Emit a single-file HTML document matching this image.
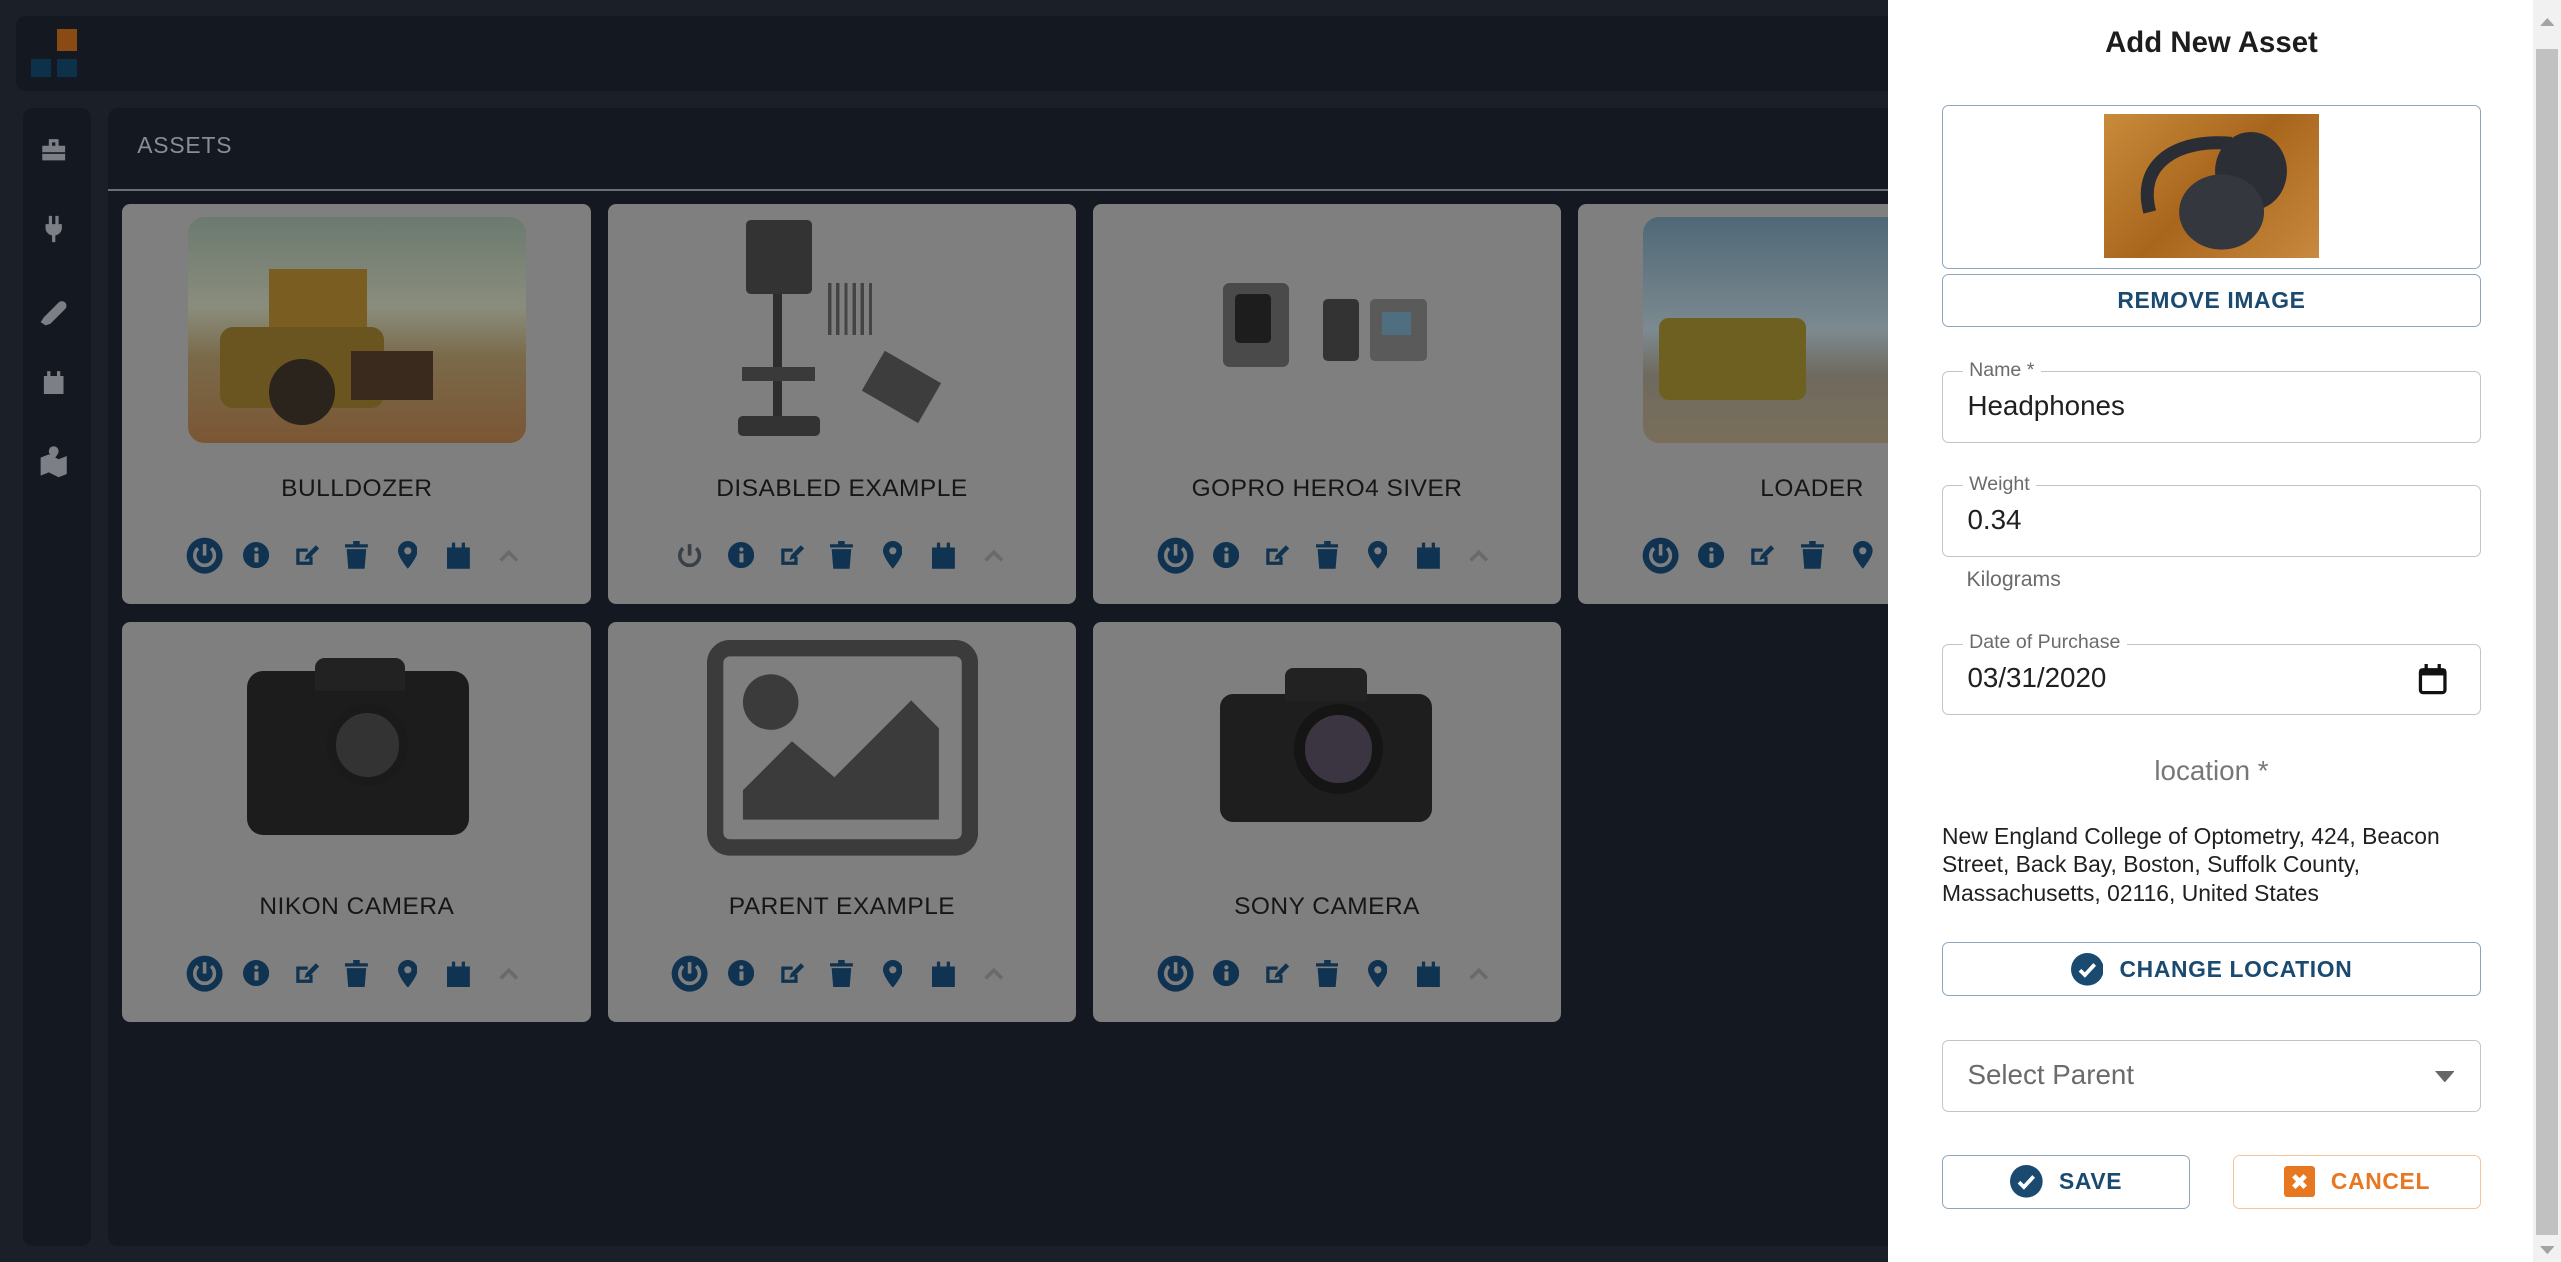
<!DOCTYPE html>
<html><head><meta charset="utf-8"><style>
*{box-sizing:border-box;margin:0;padding:0}
html,body{width:2561px;height:1262px;overflow:hidden;background:#1a1f28}
#root{zoom:1.63329;width:1568px;height:773px;position:relative;font-family:"Liberation Sans",sans-serif}
.abs{position:absolute}
.topbar{left:10px;top:10px;width:1160px;height:46px;background:#141821;border-radius:6px}
.side{left:14px;top:66px;width:42px;height:697px;background:#141821;border-radius:6px}
.main{left:66px;top:66px;width:1100px;height:697px;background:#141821;border-radius:6px}
.card{position:absolute;width:287px;height:245px;background:#7f7f7f;border-radius:5px;overflow:hidden}
.card .t{position:absolute;top:166px;width:100%;text-align:center;font-size:15px;color:#161616;letter-spacing:.3px}
.card .ic{position:absolute;top:203px;left:35px;height:24px;display:flex;align-items:center}
.card .ic span{width:31px;display:flex;justify-content:center;align-items:center}
.drawer{left:1156px;top:0;width:395px;height:773px;background:#fff}
.sb{left:1551px;top:0;width:17px;height:773px;background:#f1f1f1}
.box{position:absolute;left:33px;width:330px;border:1px solid #c4c4c4;border-radius:4px}
.lbl{position:absolute;left:12px;top:-8px;background:#fff;padding:0 4px;font-size:12px;color:#6b6b6b}
.val{position:absolute;left:15px;top:11px;font-size:17px;color:#202020}
.btn{position:absolute;border:1px solid #8ea6bd;border-radius:4px;display:flex;align-items:center;justify-content:center;font-size:14px;font-weight:bold;color:#1b4a70;letter-spacing:.4px}
</style></head><body><div id="root">
<div class="abs topbar"></div>
<div class="abs" style="left:35px;top:18px;width:12px;height:13px;background:#8a4a14"></div>
<div class="abs" style="left:19px;top:36px;width:12px;height:11px;background:#0c3148"></div>
<div class="abs" style="left:35px;top:36px;width:12px;height:11px;background:#0c3148"></div>
<div class="abs side"></div>
<svg class="abs" style="left:24px;top:80px" width="18" height="240" fill="#7c7f86">
<path d="M2 9h14v9H2z M6 5h6v4h-2V7H8v2H6z"/><rect x="2" y="13" width="14" height="1" fill="#141821"/>
<path d="M6 52h2v5H6z M10 52h2v5h-2z M4 57h10v3a5 5 0 0 1-4 4v4H8v-4a5 5 0 0 1-4-4z"/>
<path d="M1 117l2-3 9-9a2 2 0 0 1 4 4l-9 9-3 1z"/>
<path d="M3 150h12v11H3z M5 147h2v4H5z M11 147h2v4h-2z"/>
<path d="M1 200l5-2 6 3 5-2v11l-5 2-6-3-5 2z M9 193a3 3 0 0 1 3 3c0 2-3 5-3 5s-3-3-3-5a3 3 0 0 1 3-3z"/>
</svg>
<div class="abs main"></div>
<div class="abs" style="left:84px;top:81px;font-size:14px;color:#8a8d93;letter-spacing:.5px">ASSETS</div>
<div class="abs" style="left:66px;top:116px;width:1100px;height:1px;background:#6c6f75"></div>

<div class="card" style="left:75px;top:125px">
<div class="abs" style="left:40px;top:8px;width:207px;height:138px;border-radius:10px;background:linear-gradient(#6b7a70 0%,#8a8d7c 40%,#7a6a4a 62%,#7b5634 100%)"></div>
<div class="abs" style="left:90px;top:40px;width:60px;height:40px;background:#7a5d20"></div>
<div class="abs" style="left:60px;top:75px;width:100px;height:50px;background:#6a5420;border-radius:8px"></div>
<div class="abs" style="left:90px;top:95px;width:40px;height:40px;background:#2a241c;border-radius:50%"></div>
<div class="abs" style="left:140px;top:90px;width:50px;height:30px;background:#3a2a1e"></div>
<div class="t">BULLDOZER</div>
<div class="ic">ICONS1</div></div>
<div class="card" style="left:372px;top:125px">
<div class="abs" style="left:85px;top:10px;width:40px;height:45px;background:#333;border-radius:3px"></div>
<div class="abs" style="left:101px;top:55px;width:6px;height:80px;background:#2d2d2d"></div>
<div class="abs" style="left:82px;top:100px;width:45px;height:8px;background:#3a3a3a"></div>
<div class="abs" style="left:80px;top:130px;width:50px;height:12px;background:#333;border-radius:3px"></div>
<div class="abs" style="left:135px;top:48px;width:28px;height:32px;background:repeating-linear-gradient(90deg,#444 0 2px,transparent 2px 5px)"></div>
<div class="abs" style="left:160px;top:98px;width:40px;height:28px;background:#3d3d3d;transform:rotate(30deg)"></div>
<div class="t">DISABLED EXAMPLE</div>
<div class="ic">ICONS2</div></div>
<div class="card" style="left:669px;top:125px">
<div class="abs" style="left:80px;top:48px;width:40px;height:52px;background:#4a4a4a;border-radius:4px"></div>
<div class="abs" style="left:87px;top:55px;width:22px;height:30px;background:#1d1d1d;border-radius:3px"></div>
<div class="abs" style="left:141px;top:58px;width:22px;height:38px;background:#333;border-radius:3px"></div>
<div class="abs" style="left:170px;top:58px;width:35px;height:38px;background:#5a5a5a;border-radius:3px"></div>
<div class="abs" style="left:177px;top:66px;width:18px;height:14px;background:#4f6e80"></div>
<div class="t">GOPRO HERO4 SIVER</div>
<div class="ic">ICONS1</div></div>
<div class="card" style="left:966px;top:125px">
<div class="abs" style="left:40px;top:8px;width:207px;height:138px;border-radius:10px;background:linear-gradient(#4f6878 0%,#7c8a90 50%,#6f6a5e 70%,#7a6e5a 100%)"></div>
<div class="abs" style="left:50px;top:70px;width:90px;height:50px;background:#6d6020;border-radius:6px"></div>
<div class="t">LOADER</div>
<div class="ic">ICONS1</div></div>
<div class="card" style="left:75px;top:381px">
<div class="abs" style="left:76px;top:30px;width:136px;height:100px;background:#1c1c1c;border-radius:10px"></div>
<div class="abs" style="left:118px;top:22px;width:55px;height:20px;background:#222;border-radius:6px 6px 0 0"></div>
<div class="abs" style="left:125px;top:50px;width:50px;height:50px;background:#333;border-radius:50%;border:6px solid #1a1a1a"></div>
<div class="t">NIKON CAMERA</div>
<div class="ic">ICONS1</div></div>
<div class="card" style="left:372px;top:381px">
<svg class="abs" style="left:61px;top:11px" width="166" height="132"><rect x="5" y="5" width="156" height="122" rx="9" fill="none" stroke="#3b3b3b" stroke-width="10"/><circle cx="39" cy="38" r="17" fill="#3b3b3b"/><path d="M22 110V92l30-30 26 22 47-47 17 17v56z" fill="#3b3b3b"/></svg>
<div class="t">PARENT EXAMPLE</div>
<div class="ic">ICONS1</div></div>
<div class="card" style="left:669px;top:381px">
<div class="abs" style="left:78px;top:44px;width:130px;height:78px;background:#1e1e1e;border-radius:8px"></div>
<div class="abs" style="left:118px;top:28px;width:50px;height:20px;background:#222;border-radius:5px 5px 0 0"></div>
<div class="abs" style="left:123px;top:50px;width:55px;height:55px;background:#3a3540;border-radius:50%;border:7px solid #151515"></div>
<div class="t">SONY CAMERA</div>
<div class="ic">ICONS1</div></div>

<div class="abs drawer">
<div class="abs" style="left:0;top:16px;width:396px;text-align:center;font-size:18px;font-weight:bold;color:#1d1d1d">Add New Asset</div>
<div class="box" style="top:64px;height:101px;border-color:#8ea6bd"></div>
<div class="abs" style="left:132px;top:70px;width:132px;height:88px;background:linear-gradient(135deg,#c98b3c,#a8661c 50%,#c88a40)"></div>
<svg class="abs" style="left:132px;top:70px" width="132" height="88"><path d="M28 60C20 30 45 15 78 18" fill="none" stroke="#2a2d33" stroke-width="8"/><ellipse cx="90" cy="35" rx="22" ry="24" fill="#2b2e34"/><ellipse cx="72" cy="60" rx="26" ry="23" fill="#34373d"/></svg>
<div class="btn" style="left:33px;top:168px;width:330px;height:32px">REMOVE IMAGE</div>
<div class="box" style="top:227px;height:44px"><span class="lbl">Name *</span><span class="val">Headphones</span></div>
<div class="box" style="top:297px;height:44px"><span class="lbl">Weight</span><span class="val">0.34</span></div>
<div class="abs" style="left:48px;top:348px;font-size:13px;color:#6b6b6b">Kilograms</div>
<div class="box" style="top:394px;height:44px"><span class="lbl">Date of Purchase</span><span class="val">03/31/2020</span>
<svg class="abs" style="left:291px;top:12px" width="18" height="19"><rect x="1.5" y="3.5" width="15" height="14" rx="1.5" fill="none" stroke="#111" stroke-width="2"/><rect x="1" y="3" width="16" height="4" fill="#111"/><rect x="4" y="0" width="2" height="4" fill="#111"/><rect x="12" y="0" width="2" height="4" fill="#111"/></svg></div>
<div class="abs" style="left:0;top:462px;width:396px;text-align:center;font-size:17px;color:#777">location *</div>
<div class="abs" style="left:33px;top:503px;width:330px;font-size:14px;line-height:17.5px;color:#202020">New England College of Optometry, 424, Beacon Street, Back Bay, Boston, Suffolk County, Massachusetts, 02116, United States</div>
<div class="btn" style="left:33px;top:577px;width:330px;height:33px"><svg width="20" height="20" style="margin-right:10px"><circle cx="10" cy="10" r="10" fill="#1b4a70"/><path d="M5.5 10.5l3 3 6-6.5" fill="none" stroke="#fff" stroke-width="2.3"/></svg>CHANGE LOCATION</div>
<div class="box" style="top:637px;height:44px"><span class="val" style="color:#6b6b6b">Select Parent</span><svg class="abs" style="left:301px;top:18px" width="12" height="7"><path d="M0 0h12L6 7z" fill="#666"/></svg></div>
<div class="btn" style="left:33px;top:707px;width:152px;height:33px"><svg width="20" height="20" style="margin-right:10px"><circle cx="10" cy="10" r="10" fill="#1b4a70"/><path d="M5.5 10.5l3 3 6-6.5" fill="none" stroke="#fff" stroke-width="2.3"/></svg>SAVE</div>
<div class="btn" style="left:211px;top:707px;width:152px;height:33px;border-color:#f5c49b;color:#e87722"><svg width="19" height="19" style="margin-right:10px"><rect width="19" height="19" rx="2" fill="#e87722"/><path d="M6 6l7 7M13 6l-7 7" stroke="#fff" stroke-width="3"/></svg>CANCEL</div>
</div>
<div class="abs sb"><div class="abs" style="left:2px;top:30px;width:13px;height:726px;background:#c1c1c1"></div>
<svg class="abs" style="left:4px;top:11px" width="9" height="5"><path d="M0 5h9L4.5 0z" fill="#a3a3a3"/></svg>
<svg class="abs" style="left:4px;top:763px" width="9" height="5"><path d="M0 0h9L4.5 5z" fill="#a3a3a3"/></svg></div>
</div>
<script>
var c="#0f3350",g="#3a4048";
function ic(p){return '<span><svg width="24" height="24"><circle cx="12" cy="12" r="11" fill="'+(p?c:'none')+'"/><path d="M12 5v7" stroke="'+(p?'#7f7f7f':g)+'" stroke-width="2.2"/><path d="M8 7.5a6 6 0 1 0 8 0" fill="none" stroke="'+(p?'#7f7f7f':g)+'" stroke-width="2.2"/></svg></span>'+
'<span><svg width="16" height="16"><circle cx="8" cy="8" r="8" fill="'+c+'"/><rect x="7" y="7" width="2.5" height="5.5" fill="#7f7f7f"/><circle cx="8.2" cy="4.5" r="1.3" fill="#7f7f7f"/></svg></span>'+
'<span><svg width="16" height="16"><path d="M2 4h7v2H4v6h6V9h2v5H2z" fill="'+c+'"/><path d="M7 11l1-3 6-6 2 2-6 6z" fill="'+c+'"/></svg></span>'+
'<span><svg width="14" height="17"><path d="M0 2h14v2H0z M5 0h4v2H5z M1 5h12l-1 12H2z" fill="'+c+'"/></svg></span>'+
'<span><svg width="12" height="17"><path d="M6 0a6 6 0 0 1 6 6c0 4-6 11-6 11S0 10 0 6a6 6 0 0 1 6-6z" fill="'+c+'"/><circle cx="6" cy="6" r="2.2" fill="#7f7f7f"/></svg></span>'+
'<span><svg width="14" height="17"><path d="M0 4h14v13H0z M3 1h2v4H3z M9 1h2v4H9z" fill="'+c+'"/></svg></span>'+
'<span><svg width="12" height="8"><path d="M1 7l5-5 5 5" fill="none" stroke="#6a6a6a" stroke-width="2.2"/></svg></span>';}
document.querySelectorAll('.ic').forEach(function(e){e.innerHTML=ic(e.textContent=='ICONS1');});
</script>
</body></html>
